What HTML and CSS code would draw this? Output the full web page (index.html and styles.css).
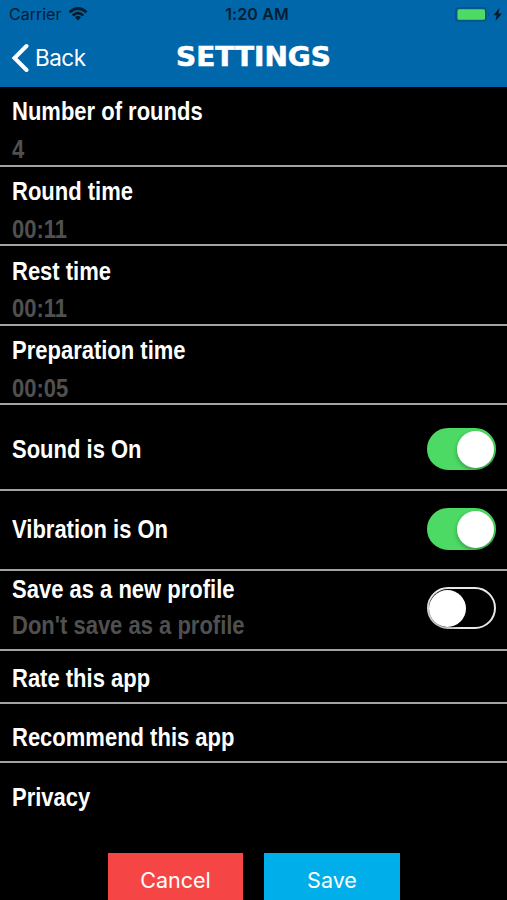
FILE: index.html
```html
<!DOCTYPE html>
<html lang="en">
<head>
<meta charset="utf-8">
<title>Settings</title>
<link rel="stylesheet" href="styles.css">
</head>
<body>
<div class="screen">
  <header class="header">
    <div class="status">
      <div class="carrier"><span>Carrier</span>
        <svg class="wifi" width="20" height="14" viewBox="0 0 20 14" fill="none" stroke="#061c30" stroke-width="2.700"><path d="M1.500 5.200Q10-2.200 18.500 5.200M4.700 8.500Q10 3.900 15.300 8.500"/><path d="M10 13.500L6.900 10.300Q10 7.800 13.100 10.300Z" fill="#061c30" stroke="none"/></svg>
      </div>
      <div class="clock">1:20 AM</div>
      <div class="power">
        <svg width="50" height="16" viewBox="0 0 50 16"><rect x="1" y="1" width="30" height="13" rx="3" fill="none" stroke="#07527f" stroke-width="1.500"/><rect x="2.500" y="2.300" width="27.500" height="10.500" rx="1.500" fill="#4cdb64"/><path d="M33 5.500Q35.500 7.500 33 9.500Z" fill="#07527f"/><path d="M44.500 1L38.300 8.300H41.600L40.500 14L47 6.500H43.500Z" fill="#061c30"/></svg>
      </div>
    </div>
    <nav class="nav">
      <div class="back"><svg width="18" height="30" viewBox="0 0 18 30" fill="none" stroke="#fff" stroke-width="4" stroke-linecap="round"><path d="M15.500 3L3.500 15L15.500 27"/></svg><span>Back</span></div>
      <h1 class="title"><span>SETTINGS</span></h1>
    </nav>
  </header>
  <main class="list">
    <section class="row pair r80"><span class="label">Number of rounds</span><span class="value">4</span></section>
    <section class="row pair r79"><span class="label">Round time</span><span class="value">00:11</span></section>
    <section class="row pair rest r80"><span class="label">Rest time</span><span class="value">00:11</span></section>
    <section class="row pair r79"><span class="label">Preparation time</span><span class="value">00:05</span></section>
    <section class="row switch sound"><span class="label">Sound is On</span><div class="toggle on"><i class="knob"></i></div></section>
    <section class="row switch vibration"><span class="label">Vibration is On</span><div class="toggle on"><i class="knob"></i></div></section>
    <section class="row switch profile"><div class="stack"><span class="label">Save as a new profile</span><span class="value">Don't save as a profile</span></div><div class="toggle"><i class="knob"></i></div></section>
    <section class="row link rate"><span class="label">Rate this app</span></section>
    <section class="row link recommend"><span class="label">Recommend this app</span></section>
    <section class="row link privacy"><span class="label">Privacy</span></section>
  </main>
  <footer class="actions"><button class="cancel">Cancel</button><button class="save">Save</button></footer>
</div>
</body>
</html>
```
FILE: styles.css
```css
* { box-sizing: border-box; }
body { margin: 0; background: #000; }
.screen {
  height: 900px;
  overflow: hidden;
  display: flex;
  flex-direction: column;
  background: #000;
  color: #fff;
  font-family: "Liberation Sans", sans-serif;
}
.header { height: 87px; flex: none; background: #0067aa; }
.status {
  height: 29px;
  padding: 0 2px 0 9px;
  display: grid;
  grid-template-columns: 1fr auto 1fr;
  align-items: center;
  color: #061c30;
  font: 17px/29px Inter, sans-serif;
}
.carrier { display: flex; align-items: center; gap: 7px; font-size: 16px; }
.wifi { margin-top: -2px; }
.clock { font-weight: 600; font-size: 16px; letter-spacing: 0.100px; }
.power { display: flex; justify-content: flex-end; }
.nav {
  height: 58px;
  padding-left: 11px;
  display: grid;
  grid-template-columns: 165px 1fr;
  align-items: center;
}
.back { display: flex; align-items: center; gap: 6px; font: 22.500px/30px Inter, sans-serif; letter-spacing: -0.500px; }
.title { margin: -2px 0 0; font: bold 26px/32px "DejaVu Sans", sans-serif; }
.title span {
  display: inline-block;
  white-space: nowrap;
  transform: scaleX(1.075);
  transform-origin: left;
  -webkit-text-stroke: 0.600px #fff;
}
.list { flex: none; }
.row { border-bottom: 2px solid #a3a3a3; padding: 0 11px 0 12px; }
.label, .value {
  display: block;
  width: max-content;
  font-size: 26px;
  font-weight: bold;
  line-height: 30px;
  transform: scaleX(0.846);
  transform-origin: left;
}
.value { color: #505050; }
.pair { display: flex; flex-direction: column; gap: 8px; padding-top: 9px; }
.rest { padding-top: 10px; gap: 7px; }
.r80 { height: 80px; }
.r79 { height: 79px; }
.switch { display: flex; align-items: center; justify-content: space-between; }
.sound { height: 86px; padding-top: 4px; }
.vibration { height: 80px; padding-bottom: 2px; }
.profile { height: 80px; padding-bottom: 4px; }
.stack { display: flex; flex-direction: column; gap: 6px; margin-top: -3px; }
.toggle {
  width: 69px;
  height: 42px;
  flex: none;
  display: flex;
  align-items: center;
  border: 2px solid #e8e8e8;
  border-radius: 21px;
}
.on { justify-content: flex-end; background: #4cd964; border-color: #4cd964; }
.knob { width: 37px; height: 37px; border-radius: 50%; background: #fff; box-shadow: 0 2px 4px rgba(0, 0, 0, 0.3); }
.rate { height: 53px; padding-top: 12px; }
.recommend { height: 59px; padding-top: 18px; }
.privacy { height: 90px; padding-top: 19px; border: 0; }
.actions { display: flex; gap: 21px; padding-left: 108px; }
.actions button {
  width: 135px;
  height: 55px;
  flex: none;
  border: 0;
  padding: 0;
  color: #fff;
  font: 21.500px/55px Inter, sans-serif;
}
.cancel { background: #f54645; }
.actions .save { width: 136px; background: #00aeea; }
```
